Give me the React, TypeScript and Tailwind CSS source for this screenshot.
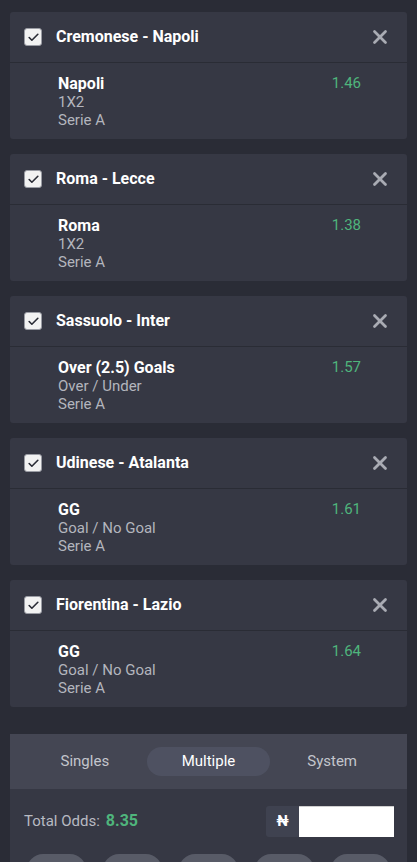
import { X, Check } from 'lucide-react'

const bets = [
  { match: 'Cremonese - Napoli', pick: 'Napoli', market: '1X2', league: 'Serie A', odds: '1.46' },
  { match: 'Roma - Lecce', pick: 'Roma', market: '1X2', league: 'Serie A', odds: '1.38' },
  { match: 'Sassuolo - Inter', pick: 'Over (2.5) Goals', market: 'Over / Under', league: 'Serie A', odds: '1.57' },
  { match: 'Udinese - Atalanta', pick: 'GG', market: 'Goal / No Goal', league: 'Serie A', odds: '1.61' },
  { match: 'Fiorentina - Lazio', pick: 'GG', market: 'Goal / No Goal', league: 'Serie A', odds: '1.64' },
]

function BetCard({ b }: { b: typeof bets[number] }) {
  return (
    <div className="rounded-[3px] bg-[#363844] overflow-hidden">
      <div className="h-[51px] flex items-center pl-[14px] pr-[16px] border-b border-[#2a2c35]">
        <div className="w-[18px] h-[18px] rounded-[3px] bg-[#f2f2f2] border border-[#9a9ca4] flex items-center justify-center">
          <Check size={13} strokeWidth={3} color="#2a2c36" />
        </div>
        <span className="ml-[14px] text-[16px] font-bold text-white flex-1">{b.match}</span>
        <X size={22} strokeWidth={3} color="#a9abb3" />
      </div>
      <div className="flex pl-[48px] pr-[46px] pt-[12px] pb-[10px]">
        <div className="flex-1 flex flex-col leading-[18px]">
          <span className="text-[16px] font-bold text-white">{b.pick}</span>
          <span className="text-[15px] text-[#b3b5bd]">{b.market}</span>
          <span className="text-[15px] text-[#b3b5bd]">{b.league}</span>
        </div>
        <span className="text-[15px] text-[#4fb57c] leading-[18px] -mt-[1px]">{b.odds}</span>
      </div>
    </div>
  )
}

export default function App() {
  return (
    <div className="w-[417px] h-[862px] overflow-hidden bg-[#2a2c36] px-[10px] pt-[12px]" style={{ fontFamily: 'Roboto, "Liberation Sans", sans-serif' }}>
      <div className="flex flex-col gap-[15px]">
        {bets.map(b => <BetCard key={b.match} b={b} />)}
      </div>
      <div className="mt-[27px] bg-[#363844] rounded-t-[3px]">
        <div className="h-[55px] bg-[#444653] grid grid-cols-3 items-center px-[13px]">
          <div className="text-center text-[15px] text-[#c3c5cc]">Singles</div>
          <div className="h-[29px] rounded-full bg-[#4e5161] flex items-center justify-center text-[15px] text-white">Multiple</div>
          <div className="text-center text-[15px] text-[#c3c5cc]">System</div>
        </div>
        <div className="h-[64px] flex items-center pl-[14px] pr-[13px]">
          <span className="text-[15px] text-[#b8bac2]">Total Odds:</span>
          <span className="ml-[6px] text-[16px] font-bold text-[#4fb57c]">8.35</span>
          <div className="ml-auto flex h-[31px]">
            <div className="w-[33px] bg-[#3f4250] rounded-l-[3px] flex items-center justify-center text-[15px] font-bold text-white">₦</div>
            <div className="w-[95px] bg-white border-t border-[#cfcfcf]" />
          </div>
        </div>
        <div className="flex gap-[17px] px-[17px] pt-[1px]">
          {[0, 1, 2, 3, 4].map(i => (
            <div key={i} className="w-[59px] h-[32px] rounded-full bg-[#585b67]" />
          ))}
        </div>
      </div>
    </div>
  )
}
